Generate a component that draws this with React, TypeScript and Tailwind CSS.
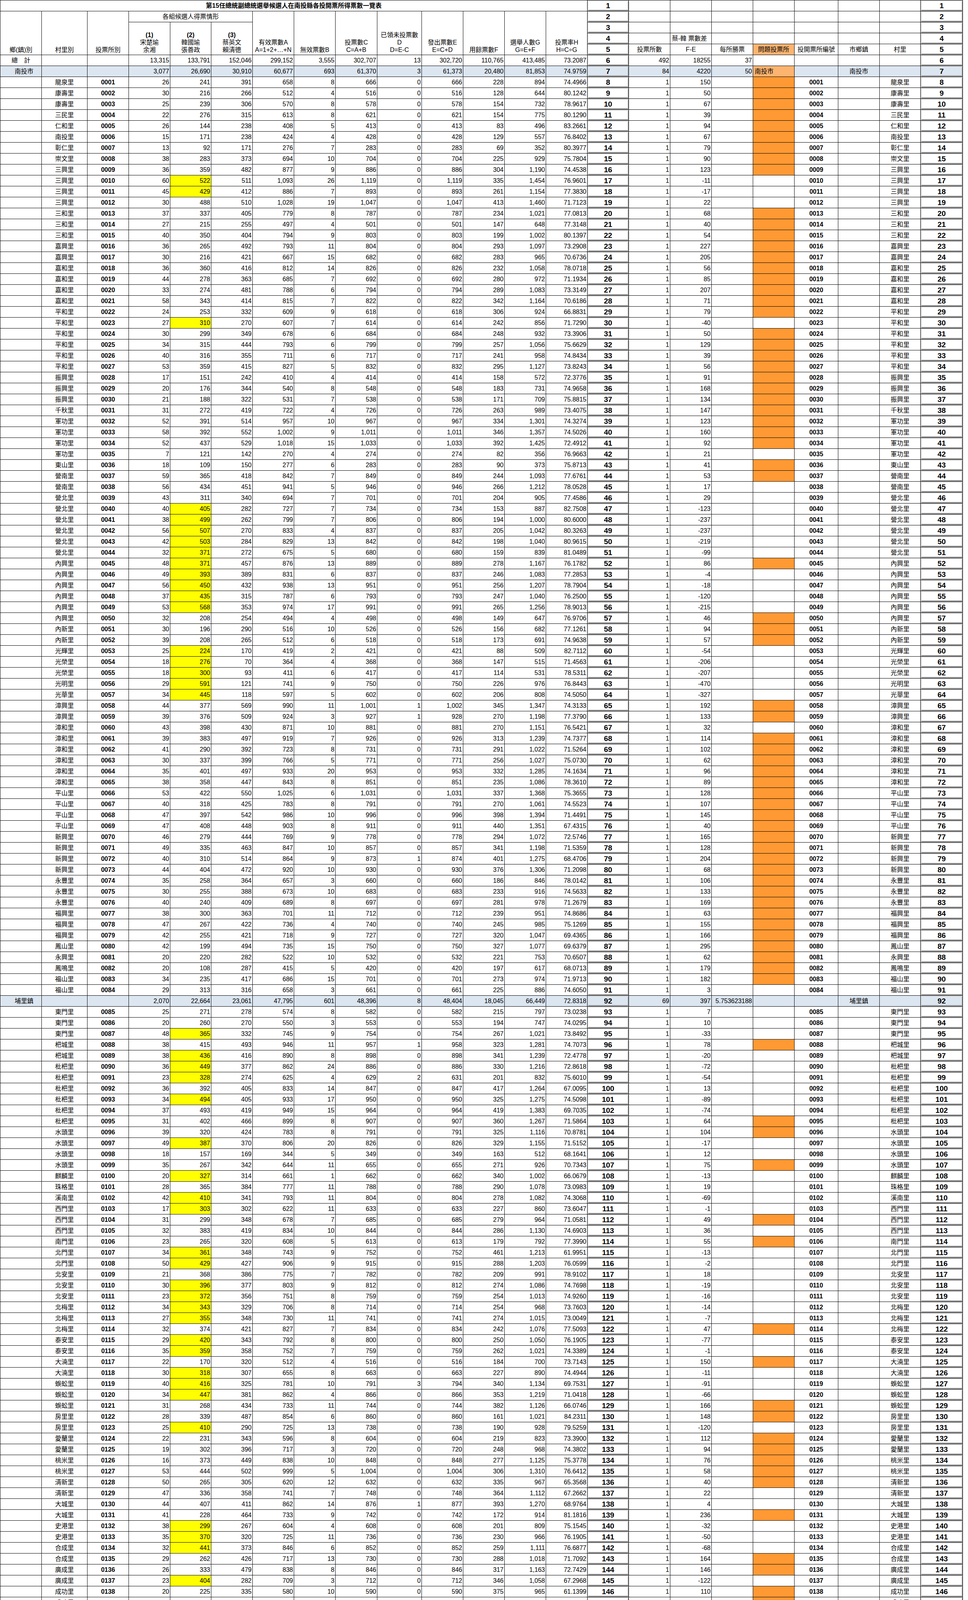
import React from "react";

const TPL =
  "grid grid-cols-[106px_117px_106px_106px_105px_106px_106px_106px_107px_114px_106px_106px_106px_106px_106px_106px_106px_106px_106px_112px_106px_105px_108px]";

const base =
  "h-[28px] border-r border-b border-black flex items-center whitespace-nowrap overflow-hidden text-[16px] leading-[16px]";
const NUM = `${base} justify-end pr-[2px]`;
const CEN = `${base} justify-center`;
const RN = `${base} justify-center font-bold text-[19px] leading-[19px] shadow-[inset_2px_2px_0_#d6d6d6,inset_-2px_-3px_0_#9c9c9c]`;
const HD =
  "border-r border-b border-black flex flex-col items-center justify-end overflow-hidden text-[16px] leading-[19px] pb-[3px] text-center";

const RAW = `龍泉里 26 241 391 8 0 228 0
康壽里 30 216 266 4 0 128 0
康壽里 25 239 306 8 0 154 0
三民里 22 276 315 8 0 154 0
仁和里 26 144 238 5 0 83 0
南投里 15 171 238 4 0 129 0
彰仁里 13 92 171 7 0 69 0
崇文里 38 283 373 10 0 225 0
三興里 36 359 482 9 0 304 0
三興里 60 522 511 26 0 335 1
三興里 45 429 412 7 0 261 1
三興里 30 488 510 19 0 413 0
三和里 37 337 405 8 0 234 0
三和里 27 215 255 4 0 147 0
三和里 40 350 404 9 0 199 0
嘉興里 36 265 492 11 0 293 0
嘉興里 30 216 421 15 0 283 0
嘉和里 36 360 416 14 0 232 0
嘉和里 44 278 363 7 0 280 0
嘉和里 33 274 481 6 0 289 0
嘉和里 58 343 414 7 0 342 0
平和里 24 253 332 9 0 306 0
平和里 27 310 270 7 0 242 1
平和里 30 299 349 6 0 248 0
平和里 34 315 444 6 0 257 0
平和里 40 316 355 6 0 241 0
平和里 53 359 415 5 0 295 0
振興里 17 151 242 4 0 158 0
振興里 20 176 344 8 0 183 0
振興里 21 188 322 7 0 171 0
千秋里 31 272 419 4 0 263 0
軍功里 52 391 514 10 0 334 0
軍功里 58 392 552 9 0 346 0
軍功里 52 437 529 15 0 392 0
軍功里 7 121 142 4 0 82 0
東山里 18 109 150 6 0 90 0
營南里 59 365 418 7 0 244 0
營南里 56 434 451 5 0 266 0
營北里 43 311 340 7 0 204 0
營北里 40 405 282 7 0 153 1
營北里 38 499 262 7 0 194 1
營北里 56 507 270 4 0 205 1
營北里 42 503 284 13 0 198 1
營北里 32 371 272 5 0 159 1
內興里 48 371 457 13 0 278 1
內興里 49 393 389 6 0 246 1
內興里 56 450 432 13 0 256 1
內興里 37 435 315 6 0 247 1
內興里 53 568 353 17 0 265 1
內興里 32 208 254 4 0 149 0
內新里 30 196 290 10 0 156 0
內新里 39 208 265 6 0 173 0
光輝里 25 224 170 2 0 88 1
光榮里 18 276 70 4 0 147 1
光榮里 18 300 93 6 0 114 1
光明里 29 591 121 9 0 226 1
光華里 34 445 118 5 0 206 1
漳興里 44 377 569 11 1 345 0
漳興里 39 376 509 3 1 270 0
漳和里 43 398 430 10 0 270 0
漳和里 39 383 497 7 0 313 0
漳和里 41 290 392 8 0 291 0
漳和里 30 337 399 5 0 256 0
漳和里 35 401 497 20 0 332 0
漳和里 38 358 447 8 0 235 0
平山里 53 422 550 6 0 337 0
平山里 40 318 425 8 0 270 0
平山里 47 397 542 10 0 398 0
平山里 47 408 448 8 0 440 0
新興里 46 279 444 9 0 294 0
新興里 49 335 463 10 0 341 0
新興里 40 310 514 9 1 401 0
新興里 44 404 472 10 0 376 0
永豐里 35 258 364 3 0 186 0
永豐里 30 255 388 10 0 233 0
永豐里 40 240 409 8 0 281 0
福興里 38 300 363 11 0 239 0
福興里 47 267 422 4 0 245 0
福興里 42 255 421 9 0 320 0
鳳山里 42 199 494 15 0 327 0
永興里 20 220 282 10 0 221 0
鳳鳴里 20 108 287 5 0 197 0
福山里 34 235 417 15 0 273 0
福山里 29 313 316 3 0 225 0
東門里 25 271 278 8 0 215 0
東門里 20 260 270 3 0 194 0
東門里 48 365 332 9 0 267 1
杷城里 38 415 493 11 1 323 0
杷城里 38 436 416 8 0 341 1
枇杷里 36 449 377 24 0 330 1
枇杷里 23 328 274 4 2 201 1
枇杷里 36 392 405 14 0 417 0
枇杷里 34 494 405 17 0 325 1
枇杷里 37 493 419 15 0 419 0
枇杷里 31 402 466 8 0 360 0
水頭里 39 320 424 8 0 325 0
水頭里 49 387 370 20 0 329 1
水頭里 18 157 169 5 0 163 0
水頭里 35 267 342 11 0 271 0
麒麟里 20 327 314 1 0 340 1
珠格里 28 365 384 11 0 290 0
溪南里 42 410 341 11 0 278 1
西門里 17 303 302 11 0 227 1
西門里 31 299 348 7 0 279 0
西門里 32 383 419 10 0 286 0
南門里 23 265 320 5 0 179 0
北門里 34 361 348 9 0 461 1
北門里 50 429 427 9 0 288 1
北安里 21 368 386 7 0 209 0
北安里 30 396 377 9 0 274 1
北安里 23 372 356 8 0 254 1
北梅里 34 343 329 8 0 254 1
北梅里 27 355 348 11 0 274 1
北梅里 32 374 421 7 0 242 0
泰安里 29 420 343 8 0 250 1
泰安里 35 359 358 7 0 262 1
大湳里 22 170 320 4 0 184 0
大湳里 30 318 307 8 0 227 1
蜈蚣里 40 416 325 10 3 340 1`;

const TAIL1 = `福興里 21 236 406 7 0 278 0
牛眠里 28 256 373 6 0 223 0
牛眠里 25 277 340 6 0 233 0
牛眠里 33 253 393 13 0 243 0
玉峰里 41 289 418 9 0 205 0
玉峰里 38 388 412 5 0 247 0
明正里 59 435 570 10 0 284 0
明正里 33 312 428 14 0 277 0`;

const TAIL2 = `延平里 18 130 280 6 0 135 0
延山里 18 249 327 11 0 231 0
山崇里 28 327 463 9 0 324 0
山崇里 21 176 221 3 1 213 0`;

type D = { vil: string; s: number; h: number; t: number; b: number; d: number; f: number; y: boolean };

function parse(txt: string): D[] {
  return txt
    .trim()
    .split("\n")
    .map((l) => {
      const p = l.trim().split(/\s+/);
      return { vil: p[0], s: +p[1], h: +p[2], t: +p[3], b: +p[4], d: +p[5], f: +p[6], y: p[7] === "1" };
    });
}

function gen(count: number, names: string[], seed: number): D[] {
  const out: D[] = [];
  for (let i = 0; i < count; i++) {
    const k = i + seed;
    const s = 15 + ((k * 37) % 40);
    const h = 200 + ((k * 71) % 250);
    const t = 260 + ((k * 53) % 250);
    out.push({
      vil: names[Math.floor(i / 2) % names.length],
      s,
      h,
      t,
      b: 3 + ((k * 7) % 12),
      d: k % 17 === 0 ? 1 : 0,
      f: 150 + ((k * 29) % 250),
      y: h > t,
    });
  }
  return out;
}

const puli2 = gen(
  30,
  ["蜈蚣里", "房里里", "愛蘭里", "桃米里", "清新里", "大城里", "史港里", "合成里", "廣成里", "成功里", "籃城里", "向善里", "鐵山里", "薰化里", "一新里"],
  7
);
const caotun2 = gen(
  72,
  ["中正里", "炎峰里", "敦和里", "和平里", "新庄里", "新厝里", "山腳里", "南埔里", "北投里", "富寮里", "石川里", "碧山里", "新豐里", "御史里", "上林里", "加老里", "坪頂里", "雙冬里", "土城里", "平林里", "復興里", "北勢里", "中山里", "中原里", "草溪里", "碧洲里", "稻香里", "富寮里", "新豐里", "御史里", "碧峰里", "山腳里", "中原里", "石川里", "南埔里", "北投里"],
  11
);
const zhushan = gen(
  33,
  ["竹山里", "竹圍里", "桂林里", "下橫里", "中正里", "中和里", "中央里", "延正里", "延和里", "延祥里", "雲林里", "江西里", "硘磘里", "富州里", "中崎里", "社寮里", "延平里"],
  23
);

const all: D[] = [...parse(RAW), ...puli2, ...parse(TAIL1), ...caotun2, ...zhushan, ...parse(TAIL2)];

type Town = { name: string; vals: string[]; cnt: string; diff: string; per: string; prob: boolean };

const towns: Record<number, Town> = {
  85: { name: "埔里鎮", vals: ["2,070", "22,664", "23,061", "47,795", "601", "48,396", "8", "48,404", "18,045", "66,449", "72.8318"], cnt: "69", diff: "397", per: "5.753623188", prob: false },
  154: { name: "草屯鎮", vals: ["2,972", "24,975", "32,796", "60,743", "667", "61,410", "1", "61,411", "19,546", "80,957", "75.8551"], cnt: "76", diff: "7821", per: "102.9078947", prob: true },
  230: { name: "竹山鎮", vals: ["1,771", "17,384", "19,102", "38,257", "512", "38,769", "2", "38,771", "16,020", "54,791", "70.7580"], cnt: "56", diff: "1718", per: "30.67857143", prob: false },
};

const fmt = (n: number) => n.toLocaleString("en-US");

function Blank({ cls = "" }: { cls?: string }) {
  return <div className={`${base} ${cls}`} />;
}

function TownCells({ t, rn }: { t: Town; rn: number }) {
  const bg = "bg-[#dce6f1]";
  return (
    <>
      <div className={`${CEN} ${bg} pl-[16px]`}>{t.name}</div>
      <Blank cls={bg} />
      <Blank cls={bg} />
      {t.vals.map((v, i) => (
        <div key={i} className={`${NUM} ${bg}`}>
          {v}
        </div>
      ))}
      <div className={`${RN} ${bg}`}>{rn}</div>
      <div className={`${NUM} ${bg}`}>{t.cnt}</div>
      <div className={`${NUM} ${bg}`}>{t.diff}</div>
      <div className={`${NUM} ${bg}`}>{t.per}</div>
      {t.prob ? <div className={`${base} bg-[#fcb470] pl-[4px]`}>{t.name}</div> : <Blank cls={bg} />}
      <Blank cls={bg} />
      <div className={`${CEN} ${bg}`}>{t.name}</div>
      <Blank cls={bg} />
      <div className={`${RN} ${bg}`}>{rn}</div>
    </>
  );
}

function TownRow({ t, rn }: { t: Town; rn: number }) {
  return (
    <div className={`${TPL} h-[28px]`}>
      <TownCells t={t} rn={rn} />
    </div>
  );
}

function DataRow({ r, st, rn }: { r: D; st: string; rn: number }) {
  const A = r.s + r.h + r.t;
  const C = A + r.b;
  const E = C + r.d;
  const G = E + r.f;
  const H = ((C / G) * 100).toFixed(4);
  const diff = r.t - r.h;
  return (
    <div className={`${TPL} h-[28px]`}>
      <Blank />
      <div className={CEN}>{r.vil}</div>
      <div className={`${CEN} font-bold`}>{st}</div>
      <div className={NUM}>{fmt(r.s)}</div>
      <div className={`${NUM} ${r.y ? "bg-[#ffff00]" : ""}`}>{fmt(r.h)}</div>
      <div className={NUM}>{fmt(r.t)}</div>
      <div className={NUM}>{fmt(A)}</div>
      <div className={NUM}>{fmt(r.b)}</div>
      <div className={NUM}>{fmt(C)}</div>
      <div className={NUM}>{fmt(r.d)}</div>
      <div className={NUM}>{fmt(E)}</div>
      <div className={NUM}>{fmt(r.f)}</div>
      <div className={NUM}>{fmt(G)}</div>
      <div className={NUM}>{H}</div>
      <div className={RN}>{rn}</div>
      <div className={NUM}>1</div>
      <div className={NUM}>{diff}</div>
      <Blank />
      <Blank cls={diff > 37 ? "bg-[#ff9933]" : ""} />
      <div className={`${CEN} font-bold`}>{st}</div>
      <Blank />
      <div className={CEN}>{r.vil}</div>
      <div className={RN}>{rn}</div>
    </div>
  );
}

function RightEmpty({ rn }: { rn: number }) {
  return (
    <>
      <div className={RN}>{rn}</div>
      <Blank />
      <Blank />
      <Blank />
      <Blank />
      <Blank />
      <Blank />
      <Blank />
      <div className={RN}>{rn}</div>
    </>
  );
}

function Header() {
  return (
    <div className={`${TPL} grid-rows-[28px_28px_28px_28px_28px_28px_28px] h-[196px]`}>
      <div className={`${CEN} col-span-14 font-bold`}>第15任總統副總統選舉候選人在南投縣各投開票所得票數一覽表</div>
      <RightEmpty rn={1} />
      <div className={`${HD} row-span-4`}>鄉(鎮)別</div>
      <div className={`${HD} row-span-4`}>村里別</div>
      <div className={`${HD} row-span-4`}>投票所別</div>
      <div className={`${CEN} col-span-3`}>各組候選人得票情形</div>
      <div className={`${HD} row-span-4`}>
        <span>有效票數A</span>
        <span>A=1+2+…+N</span>
      </div>
      <div className={`${HD} row-span-4`}>無效票數B</div>
      <div className={`${HD} row-span-4`}>
        <span>投票數C</span>
        <span>C=A+B</span>
      </div>
      <div className={`${HD} row-span-4`}>
        <span>已領未投票數</span>
        <span>D</span>
        <span>D=E-C</span>
      </div>
      <div className={`${HD} row-span-4`}>
        <span>發出票數E</span>
        <span>E=C+D</span>
      </div>
      <div className={`${HD} row-span-4`}>用餘票數F</div>
      <div className={`${HD} row-span-4`}>
        <span>選舉人數G</span>
        <span>G=E+F</span>
      </div>
      <div className={`${HD} row-span-4`}>
        <span>投票率H</span>
        <span>H=C÷G</span>
      </div>
      <RightEmpty rn={2} />
      <div className={`${HD} row-span-3`}>
        <span className="font-bold">(1)</span>
        <span>宋楚瑜</span>
        <span>余湘</span>
      </div>
      <div className={`${HD} row-span-3`}>
        <span className="font-bold">(2)</span>
        <span>韓國瑜</span>
        <span>張善政</span>
      </div>
      <div className={`${HD} row-span-3`}>
        <span className="font-bold">(3)</span>
        <span>蔡英文</span>
        <span>賴清德</span>
      </div>
      <RightEmpty rn={3} />
      <div className={RN}>4</div>
      <Blank />
      <div className={`${base} pl-[4px]`}>蔡-韓 票數差</div>
      <Blank />
      <Blank />
      <Blank />
      <Blank />
      <Blank />
      <div className={RN}>4</div>
      <div className={RN}>5</div>
      <div className={CEN}>投票所數</div>
      <div className={CEN}>F-E</div>
      <div className={CEN}>每所勝票</div>
      <div className={`${CEN} bg-[#fcb470]`}>問題投票所</div>
      <div className={CEN}>投開票所編號</div>
      <div className={CEN}>市鄉鎮</div>
      <div className={CEN}>村里</div>
      <div className={RN}>5</div>
      <div className={CEN}>總　計</div>
      <Blank />
      <Blank />
      {["13,315", "133,791", "152,046", "299,152", "3,555", "302,707", "13", "302,720", "110,765", "413,485", "73.2087"].map((v, i) => (
        <div key={i} className={NUM}>
          {v}
        </div>
      ))}
      <div className={RN}>6</div>
      <div className={NUM}>492</div>
      <div className={NUM}>18255</div>
      <div className={NUM}>37</div>
      <Blank />
      <Blank />
      <Blank />
      <Blank />
      <div className={RN}>6</div>
      <TownCells
        t={{ name: "南投市", vals: ["3,077", "26,690", "30,910", "60,677", "693", "61,370", "3", "61,373", "20,480", "81,853", "74.9759"], cnt: "84", diff: "4220", per: "50", prob: true }}
        rn={7}
      />
    </div>
  );
}

export default function App() {
  const rows: React.ReactNode[] = [];
  let rn = 8;
  all.forEach((r, i) => {
    const stn = i + 1;
    if (towns[stn]) {
      rows.push(<TownRow key={`t${stn}`} t={towns[stn]} rn={rn} />);
      rn++;
    }
    rows.push(<DataRow key={`d${stn}`} r={r} st={String(stn).padStart(4, "0")} rn={rn} />);
    rn++;
  });
  return (
    <div className="bg-white text-black font-['Liberation_Sans','Noto_Sans_CJK_TC',sans-serif]">
      <div className="w-max border-l border-t border-black flex flex-col">
        <Header />
        {rows}
      </div>
    </div>
  );
}
